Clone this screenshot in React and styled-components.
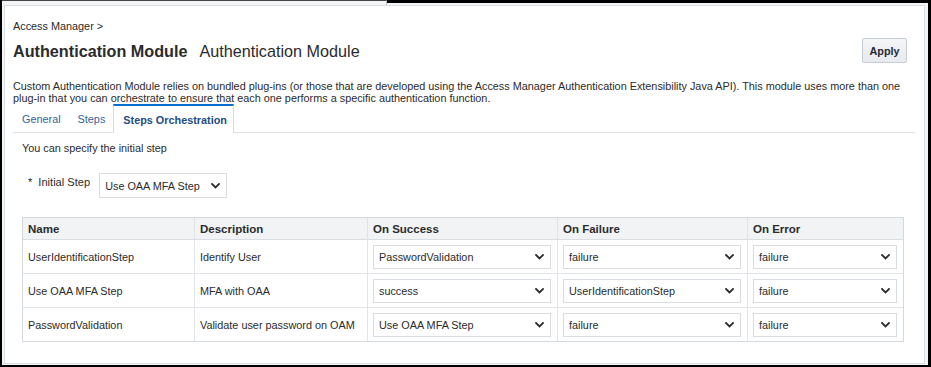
import React from "react";
import styled, { createGlobalStyle } from "styled-components";

const GlobalStyle = createGlobalStyle`
  html, body { margin: 0; padding: 0; background: #000; }
  body { font-family: "Liberation Sans", Arial, sans-serif; color: #2b2b2b; }
  * { box-sizing: border-box; }
`;

const TEXT = "10.85px";

const Frame = styled.div`
  width: 931px;
  height: 367px;
  background: #000;
  padding: 0 3px 2px 2px;
  display: flex;
  flex-direction: column;
`;

const TopStrip = styled.div`
  height: 5px;
  flex-shrink: 0;
  display: flex;
  background: #f4f5f6;
`;

const TopTab = styled.div`
  width: 385px;
  border-top: 1px solid #444;
  border-right: 1px solid #b9bec3;
`;

const TopRest = styled.div`
  flex: 1;
  border-top: 3px solid #000;
`;

const Surround = styled.div`
  flex: 1;
  display: flex;
  background: #f4f5f6;
  padding: 0 3px 1px 2px;
`;

const Panel = styled.div`
  flex: 1;
  background: #fff;
  border: 1px solid #d9dee3;
  padding: 13px 8px 0 8px;
  display: flex;
  flex-direction: column;
`;

const Breadcrumb = styled.div`
  font-size: ${TEXT};
  line-height: 14px;
  color: #2b2b2b;
`;

const HeaderRow = styled.div`
  margin-top: 5px;
  height: 25px;
  display: flex;
  align-items: center;
  justify-content: space-between;
`;

const Title = styled.h1`
  margin: 0;
  font-size: 16.2px;
  line-height: 20px;
  font-weight: bold;
  color: #2b2b2b;
  display: flex;
  align-items: baseline;
`;

const SubTitle = styled.span`
  font-weight: normal;
  margin-left: 12px;
`;

const ApplyButton = styled.button`
  width: 45px;
  height: 25px;
  margin-right: 9px;
  padding: 0;
  font-family: inherit;
  font-size: 10.8px;
  font-weight: bold;
  color: #1f2a35;
  background: linear-gradient(#f3f5f7, #e7eaee);
  border: 1px solid #c6cdd4;
  border-radius: 2px;
`;

const Description = styled.p`
  margin: 17px 0 0 0;
  font-size: ${TEXT};
  line-height: 12px;
  color: #2b2b2b;
`;

const TabBar = styled.div`
  display: flex;
  height: 29px;
  border-bottom: 1px solid #dde2e6;
  margin-right: 1px;
`;

const Tab = styled.div`
  height: ${(p) => (p.$active ? "29px" : "28px")};
  padding: ${(p) => (p.$active ? "0 6px 0 9px" : "0 7px 0 8px")};
  display: flex;
  align-items: center;
  font-size: ${TEXT};
  font-weight: ${(p) => (p.$active ? "bold" : "normal")};
  color: ${(p) => (p.$active ? "#234d82" : "#35649c")};
  border-top: 2px solid ${(p) => (p.$active ? "#0a6ed1" : "transparent")};
  border-left: 1px solid ${(p) => (p.$active ? "#d6dce1" : "transparent")};
  border-right: 1px solid ${(p) => (p.$active ? "#d6dce1" : "transparent")};
  background: #fff;
`;

const TabContent = styled.div`
  padding: 8px 11px 0 9px;
`;

const Hint = styled.div`
  font-size: ${TEXT};
  line-height: 14px;
`;

const FieldRow = styled.div`
  margin-top: 18px;
  display: flex;
  align-items: flex-start;
  gap: 9px;
  padding-left: 6px;
`;

const FieldLabel = styled.label`
  margin-top: 2px;
  font-size: 11.1px;
  line-height: 14px;
  color: #2b2b2b;
`;

const Required = styled.span`
  margin-right: 6px;
`;

const SelectBox = styled.div`
  width: ${(p) => p.$width || "100%"};
  height: ${(p) => p.$height || "24px"};
  display: flex;
  align-items: center;
  justify-content: space-between;
  padding: 0 6px 0 5px;
  border: 1px solid #d8dde2;
  background: #fff;
  font-size: ${TEXT};
  color: #2b2b2b;
`;

const Chevron = () => (
  <svg width="9" height="6" viewBox="0 0 9 6">
    <path d="M1 1 L4.5 4.5 L8 1" fill="none" stroke="#2b2b2b" strokeWidth="1.8" strokeLinecap="square" />
  </svg>
);

const Select = ({ value, width, height }) => (
  <SelectBox $width={width} $height={height}>
    <span>{value}</span>
    <Chevron />
  </SelectBox>
);

const Table = styled.div`
  margin-top: 19px;
  width: 882px;
  border: 1px solid #d3d9de;
`;

const COLS = "171px 173px 190px 190px 156px";

const HeadRow = styled.div`
  display: grid;
  grid-template-columns: ${COLS};
  height: 22px;
  background: #f1f3f5;
  border-bottom: 1px solid #d9dee3;
`;

const HeadCell = styled.div`
  display: flex;
  align-items: center;
  padding-left: 5px;
  font-size: 11.5px;
  font-weight: bold;
  color: #2b2b2b;
  border-left: 1px solid #dfe3e7;
  &:first-child { border-left: none; }
`;

const BodyRow = styled.div`
  display: grid;
  grid-template-columns: ${COLS};
  height: 34px;
  border-bottom: 1px solid #e1e5e9;
  &:last-child { height: 33px; border-bottom: none; }
`;

const Cell = styled.div`
  display: flex;
  align-items: center;
  padding: ${(p) => (p.$select ? "0 6px 0 5px" : "0 0 0 5px")};
  font-size: ${TEXT};
  color: #2b2b2b;
  border-left: 1px solid #e1e5e9;
  &:first-child { border-left: none; }
`;

const rows = [
  ["UserIdentificationStep", "Identify User", "PasswordValidation", "failure", "failure"],
  ["Use OAA MFA Step", "MFA with OAA", "success", "UserIdentificationStep", "failure"],
  ["PasswordValidation", "Validate user password on OAM", "Use OAA MFA Step", "failure", "failure"],
];

export default function App() {
  return (
    <>
      <GlobalStyle />
      <Frame>
        <TopStrip>
          <TopTab />
          <TopRest />
        </TopStrip>
        <Surround>
          <Panel>
            <Breadcrumb>Access Manager &gt;</Breadcrumb>
            <HeaderRow>
              <Title>
                Authentication Module
                <SubTitle>Authentication Module</SubTitle>
              </Title>
              <ApplyButton>Apply</ApplyButton>
            </HeaderRow>
            <Description>
              Custom Authentication Module relies on bundled plug-ins (or those that are developed using the Access Manager Authentication Extensibility Java API). This module uses more than one
              <br />
              plug-in that you can orchestrate to ensure that each one performs a specific authentication function.
            </Description>
            <TabBar>
              <Tab>General</Tab>
              <Tab>Steps</Tab>
              <Tab $active>Steps Orchestration</Tab>
            </TabBar>
            <TabContent>
              <Hint>You can specify the initial step</Hint>
              <FieldRow>
                <FieldLabel>
                  <Required>*</Required>Initial Step
                </FieldLabel>
                <Select value="Use OAA MFA Step" width="128px" height="25px" />
              </FieldRow>
              <Table>
                <HeadRow>
                  <HeadCell>Name</HeadCell>
                  <HeadCell>Description</HeadCell>
                  <HeadCell>On Success</HeadCell>
                  <HeadCell>On Failure</HeadCell>
                  <HeadCell>On Error</HeadCell>
                </HeadRow>
                {rows.map((r) => (
                  <BodyRow key={r[0]}>
                    <Cell>{r[0]}</Cell>
                    <Cell>{r[1]}</Cell>
                    <Cell $select><Select value={r[2]} /></Cell>
                    <Cell $select><Select value={r[3]} /></Cell>
                    <Cell $select><Select value={r[4]} /></Cell>
                  </BodyRow>
                ))}
              </Table>
            </TabContent>
          </Panel>
        </Surround>
      </Frame>
    </>
  );
}
